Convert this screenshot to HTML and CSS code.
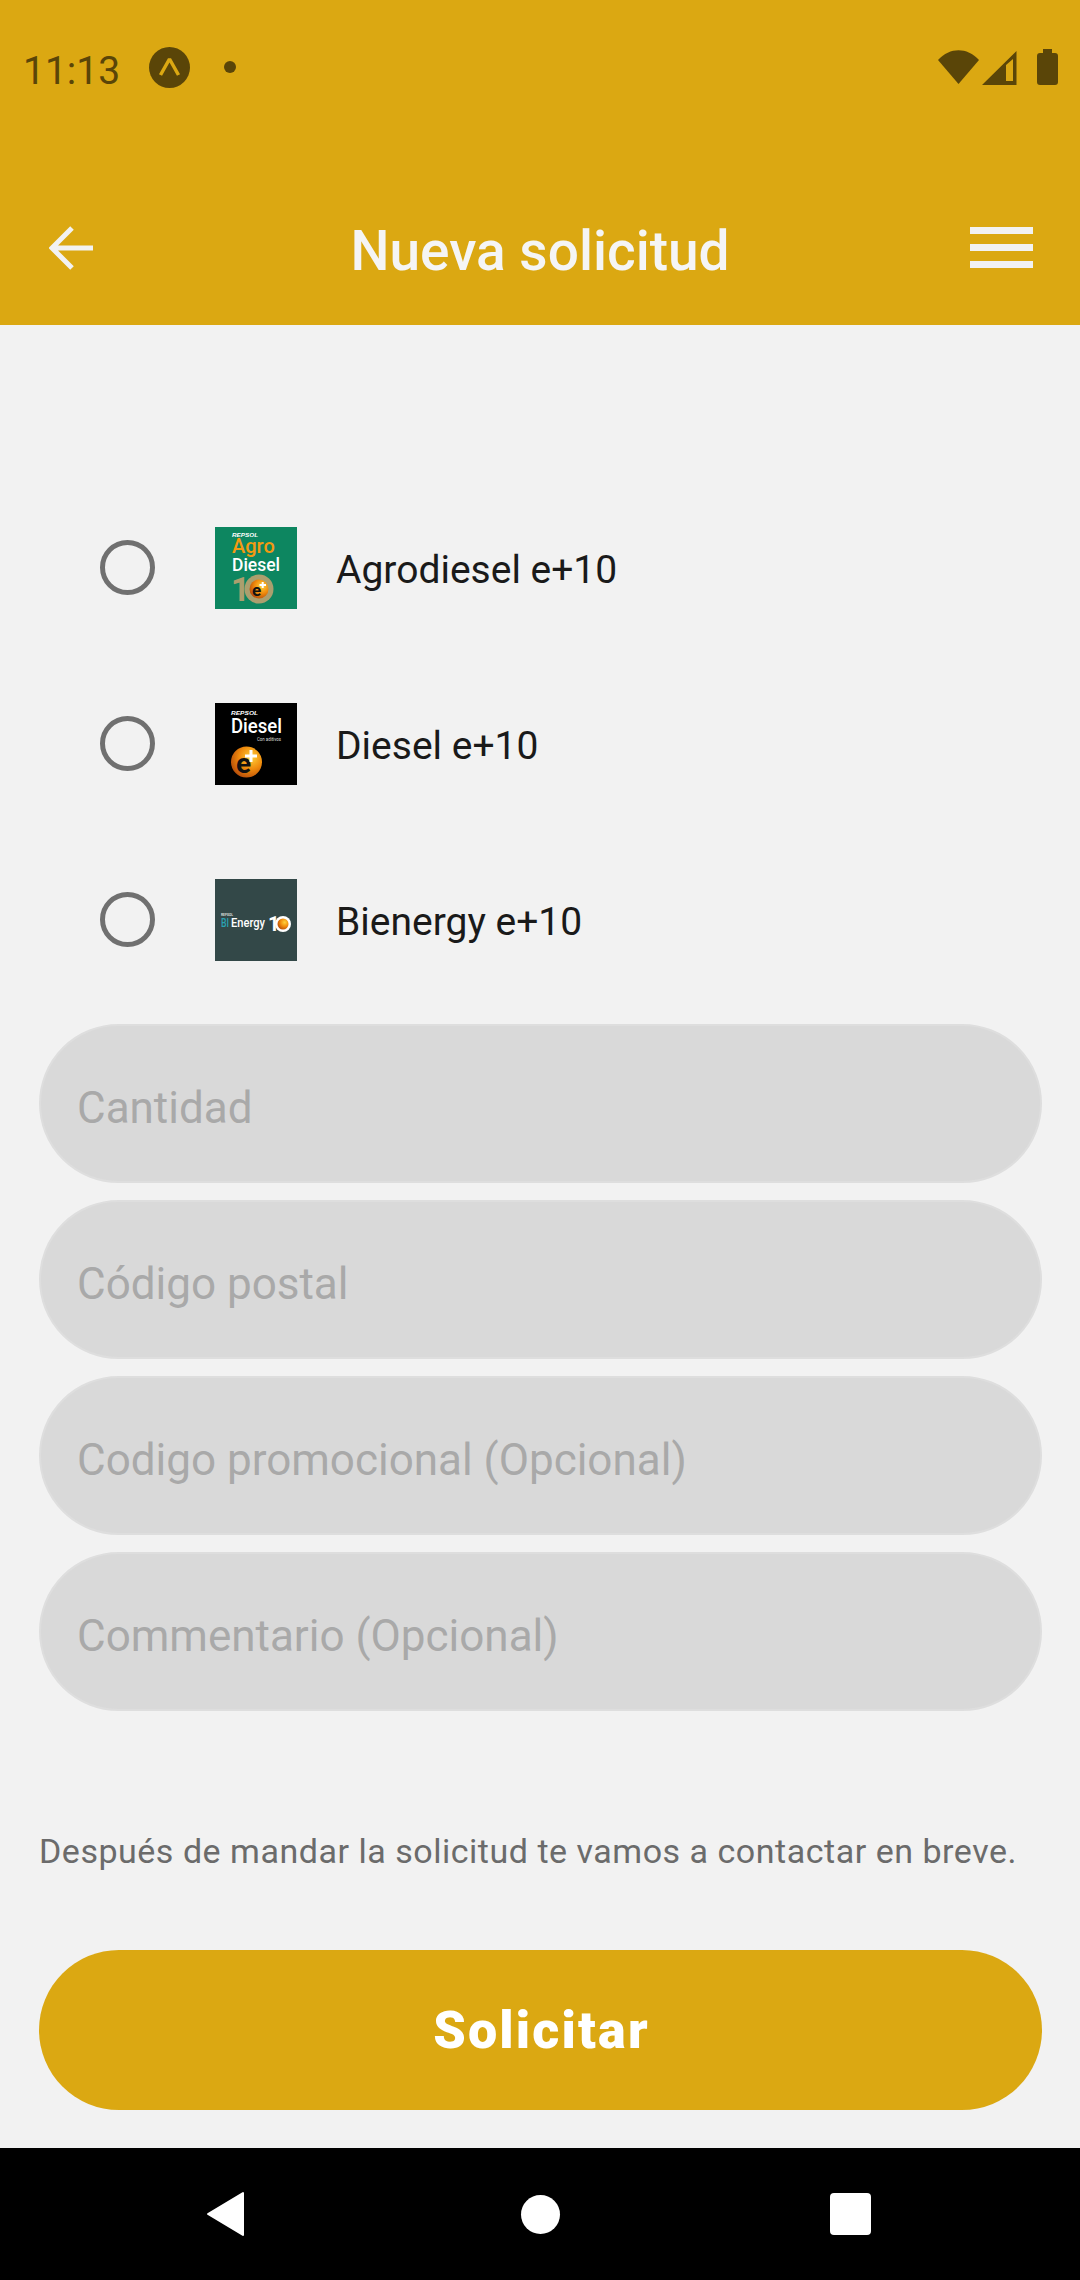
FILE: index.html
```html
<!DOCTYPE html>
<html lang="es">
<head>
    <meta charset="UTF-8">
    <meta name="viewport" content="width=device-width, initial-scale=1.0">
    <title>Nueva solicitud</title>
    <link rel="stylesheet" href="styles.css">
</head>
<body>
    <div class="screen">
        <header class="top">
            <div class="status-bar">
                <span class="clock">11:13</span>
                <svg class="expo-icon" width="41" height="41" viewBox="0 0 41 41">
                    <circle cx="20.5" cy="20.5" r="20.5" fill="#5a4508"/>
                    <path d="M11.500 28 L20.500 12 L29.500 28" fill="none" stroke="#dba812" stroke-width="3.500" stroke-linejoin="bevel"/>
                </svg>
                <span class="status-dot"></span>
                <div class="status-icons">
                    <svg class="wifi" width="41" height="34" viewBox="0 0 41 34"><path d="M0 10 C12 -3 29 -3 41 10 L20.500 34 Z" fill="#5a4508"/></svg>
                    <svg class="signal" width="35" height="34" viewBox="0 0 35 34"><path fill-rule="evenodd" d="M0 34 L34.500 0 L34.500 34 Z M24 30 L31 30 L31 8 L24 14 Z" fill="#5a4508"/></svg>
                    <svg class="battery" width="21" height="36" viewBox="0 0 21 36"><path d="M6 0 H15 V4 H18 Q21 4 21 7 V33 Q21 36 18 36 H3 Q0 36 0 33 V7 Q0 4 3 4 H6 Z" fill="#5a4508"/></svg>
                </div>
            </div>
            <div class="app-bar">
                <svg class="back" width="44" height="44" viewBox="0 0 44 44"><path d="M44 22 H4 M23 2 L3 22 L23 42" fill="none" stroke="#f2f2f2" stroke-width="5"/></svg>
                <h1>Nueva solicitud</h1>
                <div class="burger"><span></span><span></span><span></span></div>
            </div>
        </header>

        <main class="content">
            <div class="options">
                <label class="option">
                    <span class="radio"></span>
                    <svg class="logo" width="82" height="82" viewBox="0 0 82 82">
                        <defs>
                            <radialGradient id="ball" cx="0.65" cy="0.35" r="0.7">
                                <stop offset="0" stop-color="#ffd23c"/>
                                <stop offset="0.55" stop-color="#ef8a0c"/>
                                <stop offset="1" stop-color="#b9500a"/>
                            </radialGradient>
                        </defs>
                        <rect width="82" height="82" fill="#0d8660"/>
                        <text x="17" y="10" class="logo-tiny" textLength="26" lengthAdjust="spacingAndGlyphs" fill="#fff">REPSOL</text>
                        <text x="17" y="26" class="logo-agro" fill="#f39a12">Agro</text>
                        <text x="17" y="44" class="logo-diesel" textLength="48" lengthAdjust="spacingAndGlyphs" fill="#fff">Diesel</text>
                        <text x="16" y="74" class="logo-ten" fill="#ab9f6e">1</text>
                        <circle cx="44" cy="62" r="14.500" fill="#ab9f6e"/>
                        <circle cx="44" cy="62" r="9.500" fill="url(#ball)"/>
                        <text x="37" y="69" class="logo-e" fill="#111">e</text>
                        <path d="M44.500 58 H51 M47.700 55 V61" stroke="#fff" stroke-width="2"/>
                    </svg>
                    <span class="option-name">Agrodiesel e+10</span>
                </label>
                <label class="option">
                    <span class="radio"></span>
                    <svg class="logo" width="82" height="82" viewBox="0 0 82 82">
                        <rect width="82" height="82" fill="#000"/>
                        <text x="16" y="12" class="logo-tiny" textLength="27" lengthAdjust="spacingAndGlyphs" fill="#fff">REPSOL</text>
                        <text x="16" y="30" class="logo-diesel-big" textLength="51" lengthAdjust="spacingAndGlyphs" fill="#fff">Diesel</text>
                        <text x="42" y="38" class="logo-micro" textLength="24" lengthAdjust="spacingAndGlyphs" fill="#ddd">Con aditivos</text>
                        <circle cx="31.500" cy="59" r="15.500" fill="url(#ball)"/>
                        <text x="21" y="70" class="logo-e-big" fill="#111">e</text>
                        <path d="M30 53 H42 M36 47 V59" stroke="#fff" stroke-width="3"/>
                    </svg>
                    <span class="option-name">Diesel e+10</span>
                </label>
                <label class="option">
                    <span class="radio"></span>
                    <svg class="logo" width="82" height="82" viewBox="0 0 82 82">
                        <rect width="82" height="82" fill="#334848"/>
                        <text x="6" y="37" class="logo-micro-bi" textLength="12" lengthAdjust="spacingAndGlyphs" fill="#ddd">REPSOL</text>
                        <text x="6" y="48" class="logo-bi" textLength="8" lengthAdjust="spacingAndGlyphs" fill="#2aa3b3">BI</text>
                        <text x="16" y="48" class="logo-bi" textLength="34" lengthAdjust="spacingAndGlyphs" fill="#fff">Energy</text>
                        <text x="53" y="52" class="logo-ten-small" fill="#fff">1</text>
                        <circle cx="68" cy="45" r="8" fill="#fff"/>
                        <circle cx="68" cy="45" r="5.500" fill="url(#ball)"/>
                    </svg>
                    <span class="option-name">Bienergy e+10</span>
                </label>
            </div>

            <div class="fields">
                <div class="field">Cantidad</div>
                <div class="field">Código postal</div>
                <div class="field">Codigo promocional (Opcional)</div>
                <div class="field">Commentario (Opcional)</div>
            </div>

            <p class="note">Después de mandar la solicitud te vamos a contactar en breve.</p>

            <button class="submit">Solicitar</button>
        </main>

        <nav class="nav-bar">
            <svg width="40" height="46" viewBox="0 0 40 46"><path d="M37 2 V44 L2 23 Z" fill="#fff" stroke="#fff" stroke-width="2" stroke-linejoin="round"/></svg>
            <span class="nav-home"></span>
            <span class="nav-square"></span>
        </nav>
    </div>
</body>
</html>
```

FILE: styles.css
```css
* {
    box-sizing: border-box;
}

body {
    margin: 0;
    padding: 0;
    font-family: 'Roboto', sans-serif;
    background-color: #f2f2f2;
}

.screen {
    width: 1080px;
    height: 2280px;
    display: flex;
    flex-direction: column;
    overflow: hidden;
}

.top {
    height: 325px;
    background-color: #dba812;
    color: #f5f5f5;
}

.status-bar {
    height: 134px;
    padding: 47px 22px 0 23px;
    display: flex;
    align-items: flex-start;
    color: #5a4508;
}

.clock {
    font-size: 39px;
    line-height: 48px;
    margin-right: 29px;
}

.status-dot {
    width: 12px;
    height: 12px;
    margin: 14px 0 0 34px;
    background-color: #5a4508;
    border-radius: 50%;
}

.status-icons {
    margin-left: auto;
    display: flex;
    align-items: flex-start;
    gap: 3px;
    padding-top: 2px;
}

.status-icons .wifi {
    margin-top: 1px;
}

.status-icons .signal {
    margin-top: 2px;
}

.status-icons .battery {
    margin-left: 17px;
}

.app-bar {
    height: 191px;
    position: relative;
    display: flex;
    align-items: flex-start;
    justify-content: space-between;
    padding: 92px 47px 0 49px;
}

.app-bar h1 {
    position: absolute;
    left: 0;
    right: 0;
    top: 87px;
    margin: 0;
    text-align: center;
    font-size: 55px;
    line-height: 60px;
    font-weight: 500;
}

.burger {
    width: 63px;
    display: flex;
    flex-direction: column;
    gap: 10px;
    margin-top: 1px;
}

.burger span {
    height: 7px;
    background-color: #f2f2f2;
}

.content {
    flex: 1;
    padding: 0 38px 0 39px;
}

.options {
    padding-top: 202px;
}

.option {
    height: 176px;
    display: flex;
    align-items: flex-start;
    padding-left: 61px;
}

.radio {
    width: 55px;
    height: 55px;
    margin-top: 13px;
    border: 5px solid #707070;
    border-radius: 50%;
    flex-shrink: 0;
}

.logo {
    margin-left: 60px;
    flex-shrink: 0;
}

.logo-tiny {
    font: italic 700 6px 'Liberation Sans', sans-serif;
}

.logo-agro {
    font: 500 20px 'Roboto', sans-serif;
}

.logo-diesel {
    font: 500 18px 'Roboto', sans-serif;
}

.logo-diesel-big {
    font: 500 21px 'Roboto', sans-serif;
}

.logo-micro {
    font: 400 5px 'Roboto', sans-serif;
}

.logo-micro-bi {
    font: 700 3px 'Roboto', sans-serif;
}

.logo-ten {
    font: 700 33px 'Roboto', sans-serif;
}

.logo-e {
    font: 700 17px 'Roboto', sans-serif;
}

.logo-e-big {
    font: 700 28px 'Roboto', sans-serif;
}

.logo-bi {
    font: 500 12px 'Roboto', sans-serif;
}

.logo-ten-small {
    font: 700 20px 'Roboto', sans-serif;
}

.option-name {
    margin-left: 39px;
    font-size: 39px;
    line-height: 86px;
    color: #1a1a1a;
}

.fields {
    margin-top: -31px;
    display: flex;
    flex-direction: column;
    gap: 17px;
}

.field {
    height: 159px;
    padding: 8px 36px 0;
    background-color: #d9d9d9;
    border: 2px solid #dedede;
    border-radius: 80px;
    display: flex;
    align-items: center;
    font-size: 44px;
    color: #a9a9a9;
}

.note {
    margin: 120px 0 0;
    font-size: 34px;
    line-height: 40px;
    letter-spacing: 0.52px;
    color: #6b6b6b;
    white-space: nowrap;
}

.submit {
    display: block;
    width: 1003px;
    height: 160px;
    padding: 0 0 0 2px;
    margin-top: 79px;
    background-color: #dba812;
    color: #fff;
    border: none;
    border-radius: 80px;
    font-family: 'Roboto', sans-serif;
    font-size: 52px;
    font-weight: 900;
    letter-spacing: 2.2px;
}

.nav-bar {
    height: 132px;
    background-color: #000;
    display: flex;
    align-items: center;
    padding-left: 206px;
}

.nav-home {
    width: 39px;
    height: 39px;
    margin-left: 275px;
    background-color: #fff;
    border-radius: 50%;
}

.nav-square {
    width: 41px;
    height: 42px;
    margin-left: 270px;
    background-color: #fff;
    border-radius: 4px;
}
```
